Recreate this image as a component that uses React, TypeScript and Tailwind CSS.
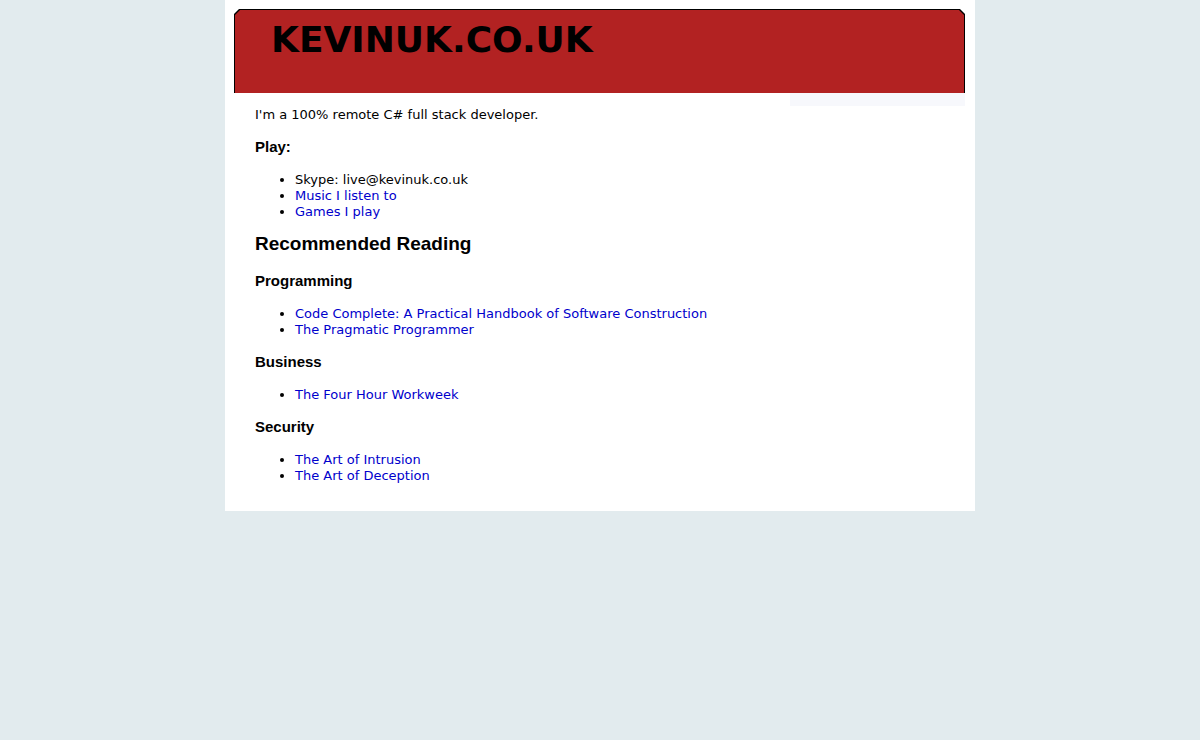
interface Item {
  label: string;
  href?: string;
}

interface SectionProps {
  title: string;
  items: Item[];
}

const play: Item[] = [
  { label: 'Skype: live@kevinuk.co.uk' },
  { label: 'Music I listen to', href: '#music' },
  { label: 'Games I play', href: '#games' },
];

const reading: SectionProps[] = [
  {
    title: 'Programming',
    items: [
      { label: 'Code Complete: A Practical Handbook of Software Construction', href: '#code-complete' },
      { label: 'The Pragmatic Programmer', href: '#pragmatic-programmer' },
    ],
  },
  {
    title: 'Business',
    items: [{ label: 'The Four Hour Workweek', href: '#four-hour-workweek' }],
  },
  {
    title: 'Security',
    items: [
      { label: 'The Art of Intrusion', href: '#art-of-intrusion' },
      { label: 'The Art of Deception', href: '#art-of-deception' },
    ],
  },
];

const Section: React.FC<SectionProps> = ({ title, items }) => {
  return (
    <section className="flex flex-col gap-4 pt-[15px]">
      <h3 className="font-['Liberation_Sans',Arial,sans-serif] text-[15px] leading-[18px] font-bold">{title}</h3>
      <ul className="list-disc pl-10">
        {items.map((item) => (
          <li key={item.label}>
            {item.href ? (
              <a href={item.href} className="text-[#0000cc] hover:underline">
                {item.label}
              </a>
            ) : (
              item.label
            )}
          </li>
        ))}
      </ul>
    </section>
  );
};

const Header: React.FC = () => {
  // black layer shows through as a 1px outline with cut corners
  return (
    <header className="bg-black px-px pt-px [clip-path:polygon(5px_0,calc(100%-5px)_0,100%_5px,100%_100%,0_100%,0_5px)]">
      <div className="h-[83px] bg-[#b22222] pl-9 pt-[10px] [clip-path:polygon(5px_0,calc(100%-5px)_0,100%_5px,100%_100%,0_100%,0_5px)]">
        <h1 className="font-['DejaVu_Sans',Verdana,sans-serif] text-[36px] leading-10 font-bold">KEVINUK.CO.UK</h1>
      </div>
    </header>
  );
};

const App: React.FC = () => {
  return (
    <div className="min-h-screen bg-[#e2ebee] font-['DejaVu_Sans',Verdana,sans-serif] text-[13px] leading-4 text-black">
      <div className="mx-auto max-w-[750px] bg-white pt-[9px] pr-[10px] pb-[27px] pl-[9px]">
        <Header />
        <div className="flex items-start">
          <main className="flex-1 pt-[14px] pl-[21px]">
            <p>I'm a 100% remote C# full stack developer.</p>
            <Section title="Play:" items={play} />
            <h2 className="pt-3 pb-px font-['Liberation_Sans',Arial,sans-serif] text-[19px] leading-6 font-bold">
              Recommended Reading
            </h2>
            {reading.map((section) => (
              <Section key={section.title} title={section.title} items={section.items} />
            ))}
          </main>
          <aside className="h-[13px] w-[175px] bg-[#f7f8fc]" />
        </div>
      </div>
    </div>
  );
};

export default App;
